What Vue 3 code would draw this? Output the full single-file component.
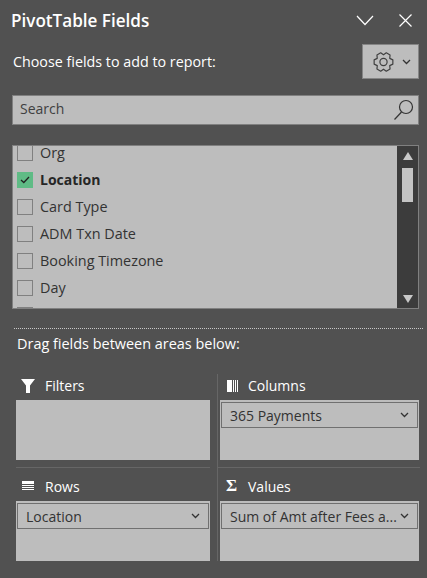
<script setup>
const fields = [
  { name: 'Org' },
  { name: 'Location', checked: true },
  { name: 'Card Type' },
  { name: 'ADM Txn Date' },
  { name: 'Booking Timezone' },
  { name: 'Day' },
  { name: '' }
]

// six lobes, one pointing left and one right like the ribbon cog
const gearPoints = []
for (let i = 0; i < 6; i++) {
  const a = i * 60
  const pts = [[a - 30, 7.2], [a - 13, 9.6], [a + 13, 9.6]]
  for (const [deg, r] of pts) {
    const rad = (deg * Math.PI) / 180
    gearPoints.push((10.5 + r * Math.cos(rad)).toFixed(2) + ',' + (10 + r * Math.sin(rad)).toFixed(2))
  }
}
const gear = gearPoints.join(' ')
</script>

<template>
  <div class="pane">
    <header class="title-row">
      <h1>PivotTable Fields</h1>
      <svg class="win-icon chev" width="18" height="11" viewBox="0 0 18 11"><path d="M1 1 9 9.500 17 1" /></svg>
      <svg class="win-icon" width="13" height="13" viewBox="0 0 13 13"><path d="M.5.5 12.500 12.500M12.500.5.500 12.500" /></svg>
    </header>

    <div class="choose-row">
      <span>Choose fields to add to report:</span>
      <button class="gear-btn">
        <svg width="21" height="20" viewBox="0 0 21 20" class="gear">
          <polygon :points="gear" />
          <circle cx="10.500" cy="10" r="3.600" />
        </svg>
        <svg class="small-chev" width="9" height="6" viewBox="0 0 9 6"><path d="M1 1 4.500 4.500 8 1" /></svg>
      </button>
    </div>

    <div class="search">
      <span>Search</span>
      <svg width="22" height="24" viewBox="0 0 22 24" class="lens">
        <circle cx="14" cy="9" r="6.500" />
        <path d="M9.500 14 2.500 21.500" />
      </svg>
    </div>

    <div class="field-list">
      <ul>
        <li v-for="(f, i) in fields" :key="i" :class="{ on: f.checked }">
          <span class="check">
            <svg v-if="f.checked" width="12" height="10" viewBox="0 0 12 10"><path d="M2 5 4.800 7.500 10 2" /></svg>
          </span>
          <span>{{ f.name }}</span>
        </li>
      </ul>
      <div class="scrollbar">
        <i class="arrow up"></i>
        <i class="thumb"></i>
        <i class="arrow down"></i>
      </div>
    </div>

    <div class="dots"></div>
    <p class="drag-text">Drag fields between areas below:</p>

    <div class="areas">
      <section class="area left">
        <h2>
          <svg width="14" height="14" viewBox="0 0 14 14"><path d="M0 0h14L9 6.500V14H5V6.500z" fill="#fff" /></svg>
          Filters
        </h2>
        <div class="drop"></div>
      </section>
      <section class="area">
        <h2>
          <svg width="11" height="12" viewBox="0 0 11 12"><path d="M0 0h5v12H0zM6 0h1v12H6zM8 0h1v12H8zM10 0h1v12h-1z" fill="#fff" /></svg>
          Columns
        </h2>
        <div class="drop">
          <div class="pill"><span>365 Payments</span><svg class="small-chev" width="9" height="6" viewBox="0 0 9 6"><path d="M1 1 4.500 4.500 8 1" /></svg></div>
        </div>
      </section>
      <section class="area left lower">
        <h2>
          <svg class="rows-icon" width="12" height="10" viewBox="0 0 12 10"><path d="M0 0h12v3H0zM0 4h12v1H0zM0 6h12v1H0zM0 8h12v1H0z" fill="#fff" /></svg>
          Rows
        </h2>
        <div class="drop">
          <div class="pill"><span>Location</span><svg class="small-chev" width="9" height="6" viewBox="0 0 9 6"><path d="M1 1 4.500 4.500 8 1" /></svg></div>
        </div>
      </section>
      <section class="area lower">
        <h2>
          <span class="sigma">Σ</span>
          Values
        </h2>
        <div class="drop">
          <div class="pill"><span>Sum of Amt after Fees a...</span><svg class="small-chev" width="9" height="6" viewBox="0 0 9 6"><path d="M1 1 4.500 4.500 8 1" /></svg></div>
        </div>
      </section>
    </div>
  </div>
</template>

<style scoped>
.pane {
  width: 427px;
  height: 578px;
  overflow: hidden;
  background: #515151;
  color: #fff;
  font-family: "Open Sans", "Noto Sans", sans-serif;
  font-size: 14px;
  box-sizing: border-box;
}

.title-row {
  display: flex;
  align-items: center;
  height: 40px;
  padding: 0 15px 0 11px;
}

.title-row h1 {
  flex: 1;
  margin: 0;
  font-size: 17.100px;
  font-weight: 600;
}

.win-icon path {
  fill: none;
  stroke: #fff;
  stroke-width: 1.200;
}

.chev {
  margin-right: 25px;
}

.choose-row {
  display: flex;
  align-items: center;
  justify-content: space-between;
  height: 35px;
  margin-top: 4px;
  padding: 0 8px 0 13px;
  font-size: 14.300px;
}

.gear-btn {
  display: flex;
  align-items: center;
  gap: 8px;
  width: 57px;
  height: 35px;
  padding: 0 0 0 10px;
  background: #bdbdbd;
  border: 1px solid #858585;
  box-sizing: border-box;
}

.gear polygon,
.gear circle {
  fill: none;
  stroke: #404040;
  stroke-width: 1.200;
  stroke-linejoin: round;
}

.small-chev {
  flex: none;
}

.small-chev path {
  fill: none;
  stroke: #333;
  stroke-width: 1.300;
}

.search {
  display: flex;
  align-items: center;
  justify-content: space-between;
  height: 30px;
  margin: 16px 8px 0 12px;
  padding: 0 4px 0 7px;
  background: #bdbdbd;
  border: 1px solid #808080;
  box-sizing: border-box;
  color: #404040;
}

.search span {
  margin-bottom: 3px;
}

.lens circle,
.lens path {
  fill: none;
  stroke: #333;
  stroke-width: 1.200;
}

.field-list {
  display: flex;
  justify-content: space-between;
  height: 164px;
  margin: 20px 8px 0 12px;
  background: #bdbdbd;
  border: 1px solid #808080;
  box-sizing: border-box;
  overflow: hidden;
}

.field-list ul {
  margin: -7px 0 0;
  padding: 0 0 0 4px;
  list-style: none;
  color: #333;
  font-size: 14.400px;
}

.field-list li {
  display: flex;
  align-items: center;
  gap: 7px;
  height: 27px;
}

.field-list li.on {
  color: #262626;
  font-size: 14px;
  font-weight: 700;
}

.check {
  display: flex;
  align-items: center;
  justify-content: center;
  width: 16px;
  height: 16px;
  border: 1px solid #808080;
  box-sizing: border-box;
}

.on .check {
  background: #5fbb85;
  border-color: #5fbb85;
}

.check path {
  fill: none;
  stroke: #222;
  stroke-width: 1.300;
}

.scrollbar {
  display: flex;
  flex-direction: column;
  align-items: center;
  width: 21px;
  padding: 6px 0 5px;
  background: #3c3c3c;
  box-sizing: border-box;
}

.thumb {
  width: 11px;
  height: 34px;
  margin-top: 8px;
  background: #c4c4c4;
}

.arrow {
  width: 0;
  height: 0;
  border-left: 5.500px solid transparent;
  border-right: 5.500px solid transparent;
}

.arrow.up {
  border-bottom: 8px solid #c8c8c8;
}

.arrow.down {
  margin-top: auto;
  border-top: 8px solid #c8c8c8;
}

.dots {
  height: 0;
  margin: 19px 4px 0 14px;
  border-top: 1px dotted #c8c8c8;
}

.drag-text {
  margin: 5px 0 0 17px;
  line-height: 19px;
  font-size: 14.450px;
}

.areas {
  display: grid;
  grid-template-columns: 201px 206px;
  grid-template-rows: 93px 94px;
  margin: 21px 0 0 16px;
}

.area {
  box-sizing: border-box;
  padding: 0 1px 0 2px;
  width: 203px;
  border-left: 1px solid #666;
}

.area.left {
  width: 194px;
  padding: 0;
  border-left: 0;
}

.area h2 {
  display: grid;
  grid-template-columns: 11px auto;
  align-items: center;
  justify-content: start;
  column-gap: 10px;
  height: 26px;
  margin: 0;
  padding: 0 0 3px 7px;
  box-sizing: border-box;
  font-size: 14px;
  font-weight: 400;
}

.area.left h2 {
  grid-template-columns: 14px auto;
  padding-left: 5px;
}

.rows-icon {
  margin-left: 1px;
}

.drop {
  height: 60px;
  padding: 2px 1px;
  background: #bdbdbd;
  box-sizing: border-box;
}

.area.lower {
  position: relative;
  padding-top: 7px;
}

.area.lower h2 {
  height: 27px;
}

/* row divider runs across both columns */
.area.lower::before {
  content: "";
  position: absolute;
  top: 0;
  left: 0;
  right: 0;
  height: 1px;
  background: #666;
}

.pill {
  display: flex;
  align-items: center;
  justify-content: space-between;
  height: 26px;
  padding: 0 8px;
  border: 1px solid #707070;
  box-sizing: border-box;
  color: #333;
}

.sigma {
  font-family: "Liberation Serif", serif;
  font-size: 17px;
  font-weight: 700;
  margin-left: -1px;
}
</style>
